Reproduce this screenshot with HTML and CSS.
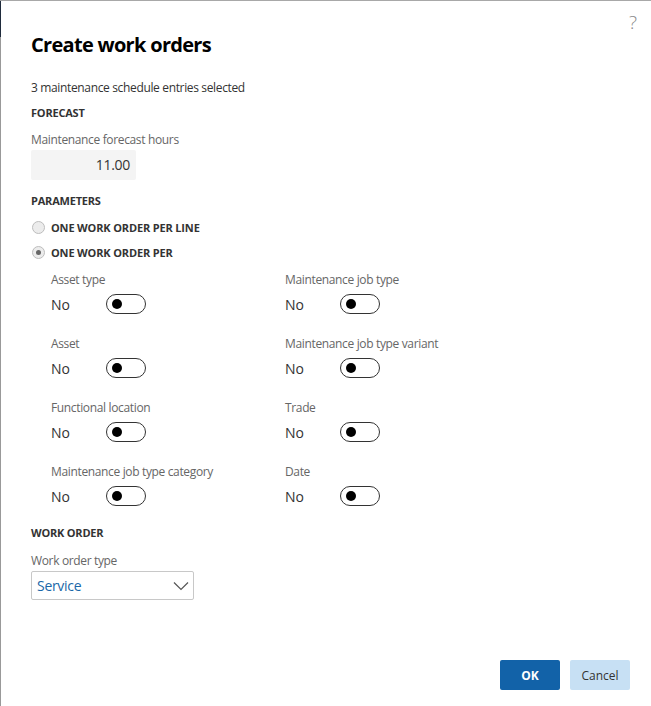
FILE: index.html
```html
<!DOCTYPE html>
<html lang="en">
<head>
<meta charset="utf-8">
<title>Create work orders</title>
<link rel="stylesheet" href="styles.css">
</head>
<body>
<div class="dialog">
  <span class="edge-dark"></span>
  <span class="help">?</span>
  <h1 class="title">Create work orders</h1>
  <p class="info">3 maintenance schedule entries selected</p>

  <h2 class="section section-forecast">FORECAST</h2>
  <label class="field-label">Maintenance forecast hours</label>
  <div class="num-input">11.00</div>

  <h2 class="section section-params">PARAMETERS</h2>
  <div class="radio-row first">
    <span class="radio"></span>
    <span class="radio-label">ONE WORK ORDER PER LINE</span>
  </div>
  <div class="radio-row">
    <span class="radio checked"></span>
    <span class="radio-label">ONE WORK ORDER PER</span>
  </div>

  <div class="toggle-grid">
    <div class="toggle-field">
      <div class="field-label">Asset type</div>
      <div class="toggle-row"><span class="toggle-value">No</span><span class="toggle"></span></div>
    </div>
    <div class="toggle-field">
      <div class="field-label">Maintenance job type</div>
      <div class="toggle-row"><span class="toggle-value">No</span><span class="toggle"></span></div>
    </div>
    <div class="toggle-field">
      <div class="field-label">Asset</div>
      <div class="toggle-row"><span class="toggle-value">No</span><span class="toggle"></span></div>
    </div>
    <div class="toggle-field">
      <div class="field-label">Maintenance job type variant</div>
      <div class="toggle-row"><span class="toggle-value">No</span><span class="toggle"></span></div>
    </div>
    <div class="toggle-field">
      <div class="field-label">Functional location</div>
      <div class="toggle-row"><span class="toggle-value">No</span><span class="toggle"></span></div>
    </div>
    <div class="toggle-field">
      <div class="field-label">Trade</div>
      <div class="toggle-row"><span class="toggle-value">No</span><span class="toggle"></span></div>
    </div>
    <div class="toggle-field">
      <div class="field-label">Maintenance job type category</div>
      <div class="toggle-row"><span class="toggle-value">No</span><span class="toggle"></span></div>
    </div>
    <div class="toggle-field">
      <div class="field-label">Date</div>
      <div class="toggle-row"><span class="toggle-value">No</span><span class="toggle"></span></div>
    </div>
  </div>

  <h2 class="section section-wo">WORK ORDER</h2>
  <div class="field-label">Work order type</div>
  <div class="select">
    <span class="select-value">Service</span>
    <svg class="chevron" width="16" height="10" viewBox="0 0 16 10"><path d="M1 1.5 L8 8.5 L15 1.5" fill="none" stroke="#555" stroke-width="1.2"/></svg>
  </div>

  <div class="footer">
    <button class="btn btn-primary">OK</button>
    <button class="btn btn-secondary">Cancel</button>
  </div>
</div>
</body>
</html>
```
FILE: styles.css
```css
* { box-sizing: border-box; }
html, body { margin: 0; padding: 0; background: #fff; }
body {
  font-family: "Open Sans", "Noto Sans", sans-serif;
  color: #333;
}
.dialog {
  position: relative;
  width: 651px;
  height: 706px;
  border-top: 1px solid #a8a8a8;
  border-left: 1px solid #999;
  padding: 30px 21px 0 30px;
  display: flex;
  flex-direction: column;
}
.edge-dark {
  position: absolute;
  left: -1px;
  top: 0;
  width: 1px;
  height: 36px;
  background: #1f2b3c;
}
.help {
  position: absolute;
  right: 14px;
  top: 10px;
  font-size: 19px;
  font-weight: 300;
  color: #8a8a8a;
  line-height: 22px;
}
.title {
  margin: 0;
  font-size: 20px;
  line-height: 28px;
  font-weight: 700;
  color: #000;
  letter-spacing: -0.7px;
}
.info {
  margin: 21px 0 0;
  font-size: 12px;
  line-height: 16px;
  color: #333;
  letter-spacing: -0.35px;
}
.section {
  margin: 0;
  font-size: 11px;
  line-height: 16px;
  font-weight: 700;
  color: #333;
  letter-spacing: -0.2px;
}
.section-forecast { margin-top: 9px; }
.section-params { margin-top: 13px; }
.section-wo { margin-top: 19px; }
.field-label {
  display: block;
  font-size: 12px;
  line-height: 16px;
  color: #666;
  letter-spacing: -0.35px;
}
.section-forecast + .field-label { margin-top: 11px; }
.section-wo + .field-label { margin-top: 12px; }
.num-input {
  margin-top: 2px;
  width: 105px;
  height: 30px;
  background: #f4f4f4;
  border-radius: 2px;
  font-size: 14px;
  line-height: 30px;
  text-align: right;
  padding-right: 6px;
  color: #333;
  letter-spacing: -0.3px;
}
.radio-row {
  display: flex;
  align-items: center;
  height: 20px;
  margin-top: 5px;
}
.radio-row.first { margin-top: 8px; }
.radio {
  width: 13px;
  height: 13px;
  border-radius: 50%;
  border: 1px solid #bdbdbd;
  background: #ececec;
  margin-left: 1px;
  margin-right: 6px;
  position: relative;
}
.radio.checked::after {
  content: "";
  position: absolute;
  left: 3px;
  top: 3px;
  width: 5px;
  height: 5px;
  border-radius: 50%;
  background: #666;
}
.radio-label {
  font-size: 11px;
  font-weight: 700;
  color: #333;
  letter-spacing: -0.15px;
}
.toggle-grid {
  margin-top: 10px;
  margin-left: 20px;
  display: grid;
  grid-template-columns: 234px 234px;
  row-gap: 22px;
}
.toggle-row {
  margin-top: 6px;
  display: flex;
  align-items: center;
  height: 20px;
}
.toggle-value {
  width: 55px;
  font-size: 14px;
  color: #333;
}
.toggle {
  position: relative;
  width: 40px;
  height: 20px;
  border: 1px solid #333;
  border-radius: 10px;
}
.toggle::after {
  content: "";
  position: absolute;
  left: 5px;
  top: 4px;
  width: 10px;
  height: 10px;
  border-radius: 50%;
  background: #000;
}
.select {
  margin-top: 2px;
  width: 163px;
  height: 29px;
  border: 1px solid #c8c8c8;
  border-radius: 2px;
  display: flex;
  align-items: center;
  justify-content: space-between;
  padding: 0 4px 0 5px;
}
.select-value {
  font-size: 14px;
  color: #1a67a8;
  letter-spacing: -0.3px;
}
.footer {
  margin-top: 60px;
  display: flex;
  justify-content: flex-end;
  gap: 10px;
}
.btn {
  width: 60px;
  height: 30px;
  border: none;
  border-radius: 2px;
  font-family: "Open Sans", "Noto Sans", sans-serif;
  font-size: 12px;
  cursor: pointer;
}
.btn-primary {
  background: #1262a8;
  color: #fff;
  font-weight: 700;
}
.btn-secondary {
  background: #c7e0f4;
  color: #333;
}
```
